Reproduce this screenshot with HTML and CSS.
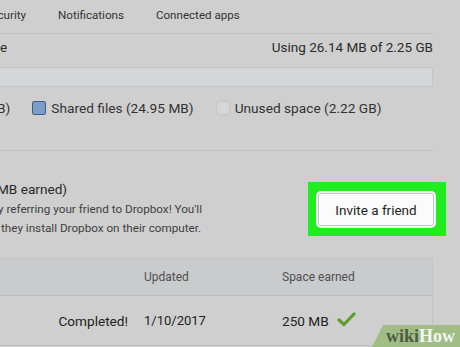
FILE: index.html
```html
<!DOCTYPE html>
<html>
<head>
<meta charset="utf-8">
<link rel="stylesheet" href="styles.css">
</head>
<body>
<div class="page">
  <nav class="tabs">
    <span class="tab tab-cut">Security</span>
    <span class="tab">Notifications</span>
    <span class="tab">Connected apps</span>
  </nav>

  <div class="usage-row">
    <span class="cut-e">Space</span>
    <span class="usage">Using 26.14 MB of 2.25 GB</span>
  </div>

  <div class="bar"></div>

  <div class="legend">
    <span class="legend-cut">B)</span>
    <span class="legend-item"><span class="box box-shared"></span>Shared files (24.95 MB)</span>
    <span class="legend-item"><span class="box box-unused"></span>Unused space (2.22 GB)</span>
  </div>

  <div class="sep"></div>

  <section class="referral">
    <div class="ref-text">
      <div class="ref-title">MB earned)</div>
      <div class="ref-desc"><span class="desc-cut">y referring your friend to Dropbox! You'll</span><br><span class="desc-line2">they install Dropbox on their computer.</span></div>
    </div>
    <div class="highlight">
      <button class="invite">Invite a friend</button>
    </div>
  </section>

  <div class="table">
    <div class="thead">
      <div class="cell status"></div>
      <div class="cell">Updated</div>
      <div class="cell">Space earned</div>
    </div>
    <div class="trow">
      <div class="cell status">Completed!</div>
      <div class="cell">1/10/2017</div>
      <div class="cell space">250 MB
        <svg class="check" width="19" height="15" viewBox="0 0 19 15"><polyline points="2,8 7,12.5 17,2" fill="none" stroke="#5e9c2f" stroke-width="3.2" stroke-linecap="round" stroke-linejoin="round"/></svg>
      </div>
    </div>
  </div>
</div>

<div class="wikihow"><span class="wiki">wiki</span><span class="how">How</span></div>
</body>
</html>
```

FILE: styles.css
```css
html, body {
  margin: 0;
  padding: 0;
}
body {
  width: 460px;
  height: 347px;
  overflow: hidden;
  background: #cfcfcf;
  font-family: Roboto, "Liberation Sans", sans-serif;
  color: #2b2b2b;
  position: relative;
}
.page {
  width: 433px;
}
.tabs {
  display: flex;
  gap: 32px;
  height: 30px;
  padding-bottom: 3px;
  align-items: center;
  border-bottom: 1px solid #c2c2c2;
  font-size: 11.6px;
  color: #333;
}
.tab-cut {
  margin-left: -15.5px;
}
.usage-row {
  display: flex;
  justify-content: space-between;
  padding-top: 4px;
  line-height: 18px;
  font-size: 13.5px;
  overflow: hidden;
}
.cut-e {
  margin-left: -30px;
}
.bar {
  margin-top: 11px;
  height: 18px;
  margin-left: -2px;
  background: #d5d6d7;
  border: 1px solid #c3c4c5;
  border-radius: 2px;
}
.legend {
  margin-top: 13px;
  display: flex;
  gap: 22px;
  align-items: center;
  line-height: 16px;
  font-size: 13.7px;
  color: #333;
}
.legend-cut {
  margin-left: -3px;
}
.legend-item {
  display: flex;
  align-items: center;
}
.box {
  width: 12px;
  height: 12px;
  border-radius: 2px;
  margin-right: 5px;
}
.box-shared {
  background: #7c9dc5;
  border: 1px solid #3e5e92;
}
.box-unused {
  background: #d6d6d6;
  border: 1px solid #c6c6c6;
}
.sep {
  margin-top: 34px;
  height: 1px;
  background: #c3c3c3;
}
.referral {
  display: flex;
  align-items: flex-start;
  margin-top: 29px;
}
.ref-text {
  flex: 1;
  white-space: nowrap;
}
.ref-title {
  font-size: 13.6px;
  line-height: 18px;
  margin-left: -3px;
  color: #2a2a2a;
}
.ref-desc {
  margin-top: 2px;
  font-size: 11.7px;
  line-height: 19px;
  color: #3f3f3f;
}
.desc-cut {
  margin-left: -2px;
}
.desc-line2 {
  margin-left: 1px;
}
.highlight {
  margin-top: 2px;
  margin-right: -13px;
  width: 116px;
  padding: 11px 12px 10px 10px;
  background: #20ec20;
}
.invite {
  display: block;
  width: 116px;
  height: 33px;
  padding: 0;
  background: #fbfbfb;
  border: 1px solid #c4c7cb;
  border-radius: 3px;
  box-shadow: 0 0 0 2px #f4f6f4;
  font-family: Roboto, "Liberation Sans", sans-serif;
  font-size: 13.5px;
  color: #1e1e1e;
}
.table {
  margin-top: 20px;
  border-top: 1px solid #c4c4c4;
  border-right: 1px solid #c4c4c4;
}
.thead, .trow {
  display: grid;
  grid-template-columns: 144px 138px 1fr;
  align-items: center;
}
.thead {
  height: 36px;
  background: #cacbcc;
  border-bottom: 1px solid #bdbdbd;
  font-size: 12px;
  color: #505050;
}
.trow {
  height: 49px;
  border-bottom: 1px solid #bdbdbd;
  font-size: 13.6px;
  color: #222;
}
.status {
  text-align: right;
  padding-right: 16px;
}
.trow .cell:nth-child(2) {
  font-size: 13px;
}
.space {
  display: flex;
  align-items: center;
}
.check {
  margin-left: 8px;
  margin-top: -3px;
}
.wikihow {
  position: absolute;
  right: 0;
  bottom: 0;
  width: 88px;
  height: 22px;
  background: #a0bd86;
  clip-path: polygon(11px 0, 100% 0, 100% 100%, 0 100%);
  font-family: "Liberation Serif", serif;
  font-weight: bold;
  font-size: 18px;
  line-height: 23px;
  text-align: right;
  padding-right: 5px;
  box-sizing: border-box;
}
.wiki {
  color: #4d5c43;
}
.how {
  color: #f3f5f0;
}
```
